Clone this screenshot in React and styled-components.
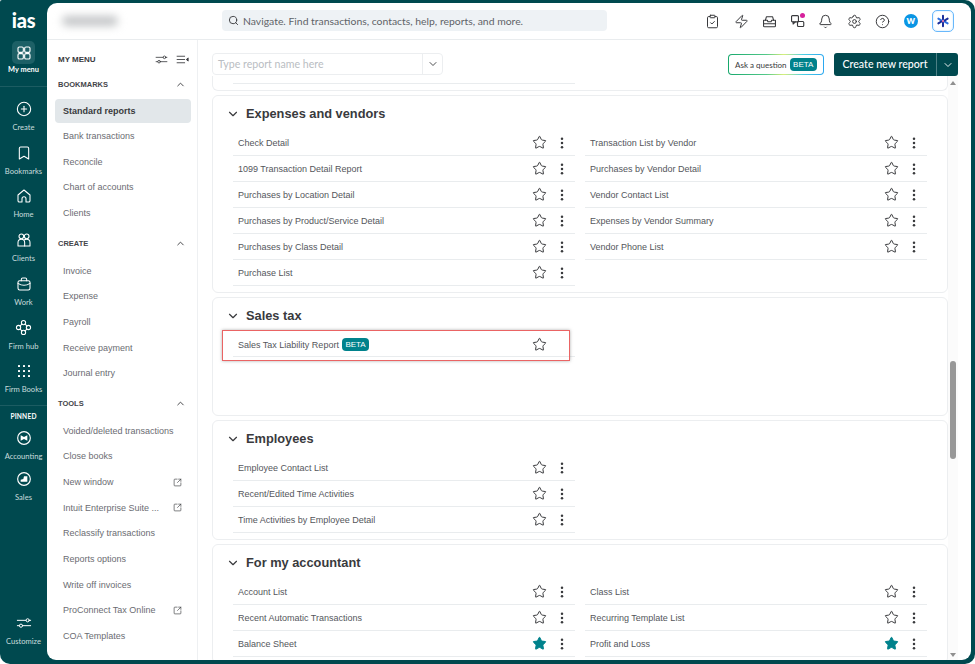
import React from 'react';
import styled, { createGlobalStyle } from 'styled-components';
import { ChevronDown, ChevronUp, Search, ClipboardCheck, Zap, Bell, Settings, CircleHelp, Star, CirclePlus, Bookmark, SquareArrowOutUpRight } from 'lucide-react';

const TEAL = '#00494f';
const ACCENT = '#00828c';
const SANS = '"Liberation Sans", Arial, sans-serif';
const HUMAN = 'Lato, "Noto Sans", sans-serif';

const Global = createGlobalStyle`
  html, body { margin: 0; padding: 0; background: #fff; }
  * { box-sizing: border-box; }
`;

const Win = styled.div`
  width: 975px; height: 664px; display: flex; background: ${TEAL};
  border-radius: 2px 10px 10px 10px; overflow: hidden; font-family: ${SANS};
`;
const Rail = styled.nav`
  width: 47px; flex: none; display: flex; flex-direction: column; align-items: center;
  padding: 10px 0 10px; color: #fff;
`;
const Logo = styled.div`
  height: 20px; font: 900 20px/20px ${HUMAN}; letter-spacing: -0.2px; color: #fff;
`;
const Tile = styled.div`
  width: 23px; height: 23px; margin-top: 11px; border-radius: 5px; background: #1d6066;
  display: flex; align-items: center; justify-content: center;
`;
const TileLabel = styled.div`
  height: 12px; font: 700 7.4px/12px ${HUMAN}; color: #fff; white-space: nowrap;
`;
const RailRule = styled.div`
  width: 47px; height: 1px; flex: none; background: #1c5c62; margin-top: ${p => p.$top}px;
`;
const RailGroup = styled.div`padding-top: 9px; display: flex; flex-direction: column;`;
const RailItem = styled.div`
  width: 47px; flex: none; height: ${p => p.$h || 43.7}px; padding-top: 5px;
  display: flex; flex-direction: column; align-items: center; color: #fff;
  & > svg { flex: none; }
`;
const RailText = styled.span`
  margin-top: 5px; height: 10px; font: 400 7.6px/10px ${HUMAN}; color: #c9dcdd; white-space: nowrap;
`;
const Pinned = styled.div`
  height: 10px; margin-top: 5px; margin-bottom: 4px; font: 700 6.6px/10px ${HUMAN}; color: #fff; letter-spacing: .2px;
`;
const RailFoot = styled.div`margin-top: auto;`;

const Panel = styled.div`
  flex: 1; min-width: 0; margin: 3px 4px 4px 0; background: #fff; border-radius: 10px 9px 9px 9px;
  display: flex; flex-direction: column; overflow: hidden;
`;
const TopBar = styled.header`
  height: 37px; flex: none; border-bottom: 1px solid #e9ecee; display: flex; align-items: center;
  padding-left: 175px; padding-right: 17px; position: relative;
`;
const BlurName = styled.div`
  position: absolute; left: 15px; top: 13px; width: 56px; height: 10px; background: #c3c5c7;
  border-radius: 5px; filter: blur(4px);
`;
const GlobalSearch = styled.div`
  width: 385px; height: 21px; margin-top: -1px; background: #eef2f5; border-radius: 4px; display: flex; align-items: center;
  padding-left: 6px; gap: 4px; color: #5f6368; font: 400 10.4px ${HUMAN};
`;
const TopIcons = styled.div`
  margin-left: auto; display: flex; align-items: center; color: #393a3d;
`;
const TopIcon = styled.div`
  width: 28.3px; height: 22px; display: flex; align-items: center; justify-content: center; position: relative;
`;
const Dot = styled.span`
  position: absolute; top: 3px; right: 7px; width: 5px; height: 5px; border-radius: 50%; background: #d6219c;
`;
const Avatar = styled.div`
  width: 14px; height: 14px; border-radius: 50%; background: #0a95e4; color: #fff;
  font: 800 8px/14px ${HUMAN}; text-align: center;
`;
const AiButton = styled.div`
  width: 22px; height: 22px; margin-left: 7px; border-radius: 5px; border: 1.5px solid #69b8fb;
  display: flex; align-items: center; justify-content: center; box-shadow: inset 0 0 2px #b8e0ff;
`;

const Body = styled.div`flex: 1; min-height: 0; display: flex;`;

const Sidebar = styled.aside`
  width: 151px; flex: none; border-right: 1px solid #eef0f2; padding: 7px 6px 0 8px; overflow: hidden;
`;
const MenuTop = styled.div`
  height: 24px; display: flex; align-items: center; padding: 0 2.5px 0 3px; color: #393a3d;
  font: 700 8px ${SANS};
`;
const MenuTools = styled.div`margin-left: auto; display: flex; align-items: center; gap: 8px; color: #393a3d;`;
const Section = styled.section`
  & + & { margin-top: 5px; }
  & + & > div:last-child { margin-top: 2.5px; }
`;
const SectionHead = styled.div`
  height: 26px; display: flex; align-items: center; justify-content: space-between;
  padding: 0 5px 0 3px; font: 700 7.5px ${SANS}; color: #44464a; text-transform: uppercase;
`;
const NavList = styled.div`margin-top: 1.5px;`;
const NavItem = styled.div`
  height: 24px; margin-bottom: 1.67px; border-radius: 4px; display: flex; align-items: center;
  padding: 0 9px 0 8px; justify-content: space-between; white-space: nowrap;
  font: ${p => (p.$active ? 700 : 400)} 9px ${SANS};
  color: ${p => (p.$active ? '#393a3d' : '#6b6c72')};
  background: ${p => (p.$active ? '#e2e7ea' : 'transparent')};
`;

const Main = styled.main`flex: 1; min-width: 0; display: flex; flex-direction: column;`;
const Toolbar = styled.div`
  height: 36px; flex: none; padding: 13px 13px 0 14px; display: flex; align-items: flex-start;
`;
const ReportFilter = styled.div`
  width: 231px; height: 22px; border: 1px solid #eceef0; border-radius: 4px; display: flex; align-items: stretch;
`;
const FilterText = styled.div`
  flex: 1; padding-left: 5px; font: 400 10.6px/20px ${HUMAN}; color: #b9bdc2;
`;
const FilterCaret = styled.div`
  width: 20px; border-left: 1px solid #eceef0; display: flex; align-items: center; justify-content: center; color: #393a3d;
`;
const Ask = styled.div`
  margin-left: auto; margin-top: 1px; width: 96px; height: 21px; border-radius: 4px; border: 1.5px solid transparent;
  background: linear-gradient(#fff, #fff) padding-box,
    linear-gradient(90deg, #17a86c, #54c98a 40%, #d8ef7c 58%, #4fcfe4 78%, #2aa7f0) border-box;
  display: flex; align-items: center; padding-left: 6px; gap: 3px; font: 400 8px ${HUMAN}; color: #393a3d; white-space: nowrap;
`;
const Beta = styled.span`
  display: inline-flex; align-items: center; height: 13px; background: ${ACCENT}; color: #fff; border-radius: 4px;
  font: 400 8px/13px ${SANS}; padding: 0 3.5px;
`;
const CreateBtn = styled.div`
  margin-left: 10px; width: 124px; height: 23px; background: ${TEAL}; color: #fff; border-radius: 3px;
  display: flex; align-items: stretch; font: 500 10.6px/23px ${HUMAN};
`;
const CreateLabel = styled.div`flex: 1; text-align: center; white-space: nowrap;`;
const CreateCaret = styled.div`
  width: 22px; border-left: 1px solid #4d8085; display: flex; align-items: center; justify-content: center;
`;

const ScrollRow = styled.div`flex: 1; min-height: 0; display: flex; padding-right: 13px;`;
const Cards = styled.div`
  flex: 1; min-width: 0; padding-left: 14px; display: flex; flex-direction: column; gap: 4px; overflow: hidden;
`;
const Stub = styled.div`
  height: 15px; flex: none; border: 1px solid #eceef0; border-top: 0; border-radius: 0 0 6px 6px; padding: 7px 20px 0;
`;
const StubLine = styled.div`width: 342px; height: 1px; background: #e9ecee;`;
const Card = styled.section`
  flex: none; border: 1px solid #eceef0; border-radius: 6px; padding: 0 20px 6px;
  min-height: ${p => p.$min || 0}px;
`;
const CardHead = styled.h2`
  margin: 0 0 0 -7px; height: 34px; display: flex; align-items: center; gap: 6px; color: #393a3d;
  padding-top: 1px; font: 700 12.8px ${SANS};
`;
const Grid = styled.div`display: grid; grid-template-columns: 342px 342px; column-gap: 10px; align-items: start;`;
const Col = styled.div`display: flex; flex-direction: column;`;
const Row = styled.div`
  height: ${p => (p.$flag ? 25 : 26)}px; border-bottom: 1px solid #e9ecee; display: flex; align-items: center; padding-left: 5px;
  font: 400 9px ${SANS}; color: #54565b; position: relative;
  ${p => p.$flag && `
    padding-top: 1px;
    &::before { content: ''; position: absolute; left: -11px; width: 346px; top: -2px; height: 29px;
      border: 1.5px solid #ea6464; box-shadow: 0 0 3px rgba(110,110,110,.55); pointer-events: none; }
  `}
`;
const RowBeta = styled(Beta)`margin-left: 3px;`;
const StarSlot = styled.div`
  position: absolute; left: 298.5px; top: 4.5px; width: 15px; height: 15px; display: flex;
`;
const Kebab = styled.svg`position: absolute; left: 325.5px; top: 6.5px; width: 6px; height: 12px; color: #393a3d;`;

const Scrollbar = styled.div`
  width: 10px; flex: none; background: #fbfbfb; display: flex; flex-direction: column; align-items: center; padding-top: 5px;
`;
const Arrow = styled.div`
  width: 0; height: 0; border-left: 3px solid transparent; border-right: 3px solid transparent;
  ${p => p.$down ? 'border-top: 4px solid #8f8f8f; margin-top: auto; margin-bottom: 3px;' : 'border-bottom: 4px solid #8f8f8f;'}
`;
const Thumb = styled.div`width: 6px; height: 98px; margin-top: 276px; border-radius: 3px; background: #989898;`;

const Ico = ({ size = 16, sw = 1.6, children, vb = 24 }) => (
  <svg width={size} height={size} viewBox={`0 0 ${vb} ${vb}`} fill="none" stroke="currentColor" strokeWidth={sw} strokeLinecap="round" strokeLinejoin="round">{children}</svg>
);
const GridIcon = () => (
  <Ico size={16} sw={1.7}>
    <rect x="3" y="3" width="8" height="8" rx="2" /><rect x="13" y="3" width="8" height="8" rx="2" />
    <rect x="3" y="13" width="8" height="8" rx="2" /><rect x="13" y="13" width="8" height="8" rx="2" />
  </Ico>
);
const HomeIcon = () => (
  <Ico><path d="M3 10.5 12 3l9 7.5V19a2 2 0 0 1-2 2h-4v-5a3 3 0 0 0-6 0v5H5a2 2 0 0 1-2-2z" /></Ico>
);
const ClientsIcon = () => (
  <Ico>
    <circle cx="8" cy="6.5" r="3.5" /><circle cx="16" cy="6.5" r="3.5" />
    <path d="M3 21v-5c0-3 2-5 5-5s5 2 5 5v5z" /><path d="M12.5 11.5c1-.4 2.2-.5 3.5-.5 3 0 5 2 5 5v5h-8" />
  </Ico>
);
const WorkIcon = () => (
  <Ico>
    <rect x="3" y="7" width="18" height="14" rx="2.5" /><path d="M8 7V5a2 2 0 0 1 2-2h4a2 2 0 0 1 2 2v2" />
    <path d="M3 11c3 2 6 3 9 3s6-1 9-3" />
  </Ico>
);
const HubIcon = () => (
  <Ico size={17} sw={1.5}>
    <circle cx="12" cy="5" r="3" /><circle cx="5" cy="12" r="3" /><circle cx="19" cy="12" r="3" /><circle cx="12" cy="19" r="3" />
    <path d="m9.8 7.2-2.6 2.6M14.2 7.2l2.6 2.6M7.2 14.2l2.6 2.6M16.8 14.2l-2.6 2.6" />
  </Ico>
);
const DotsIcon = () => (
  <svg width="16" height="16" viewBox="0 0 16 16" fill="currentColor">
    {[3, 8, 13].flatMap(y => [3, 8, 13].map(x => <rect key={`${x}-${y}`} x={x - 1} y={y - 1} width="2" height="2" rx=".5" />))}
  </svg>
);
const BowIcon = () => (
  <Ico sw={1.7}><circle cx="12" cy="12" r="9.5" /><path d="M7 8v8l5-2.5L17 16V8l-5 2.5z" fill="currentColor" stroke="none" /></Ico>
);
const SalesIcon = () => (
  <Ico sw={1.7}><circle cx="12" cy="12" r="9.5" /><path d="M7 16v-3l4-1 1-4h5v8z" fill="currentColor" stroke="none" /></Ico>
);
const SlidersIcon = ({ size = 16 }) => (
  <Ico size={size} sw={1.5}>
    <path d="M2 8h13M20 8h2M2 16h3M10 16h12" /><circle cx="17.5" cy="8" r="2.4" /><circle cx="7.5" cy="16" r="2.4" />
  </Ico>
);
const CollapseIcon = () => (
  <Ico size={13} sw={1.6}>
    <path d="M2 6h14M2 12h14M2 18h14" /><path d="M22 9.5 19 12l3 2.5z" fill="currentColor" />
  </Ico>
);
const TrayIcon = () => (
  <Ico size={15} sw={1.7}>
    <path d="M5.5 10 7 4.5h10L18.5 10" />
    <path d="M2.5 10h6l1 2.5h5l1-2.5h6v9a1.5 1.5 0 0 1-1.5 1.5H4A1.5 1.5 0 0 1 2.5 19z" />
    <path d="M2.5 15.5h19" />
  </Ico>
);
const ChatIcon = () => (
  <Ico size={15} sw={1.8}>
    <rect x="2.5" y="2.5" width="11" height="10" rx="1.5" /><rect x="12" y="12" width="10" height="8" rx="1.5" />
    <path d="M5 12.5V16l3.5-3.5" />
  </Ico>
);
const AiGlyph = () => (
  <svg width="14" height="14" viewBox="0 0 24 24" stroke="#1a2f9c" strokeWidth="3.4" strokeLinecap="round" fill="none">
    <path d="M12 3v6M12 15v6" /><path d="M4 8l5 3M15 13l5 3" stroke="#2e6fe0" /><path d="M20 8l-5 3M9 13l-5 3" />
    <circle cx="12" cy="12" r="1.5" fill="#e0307a" stroke="none" />
  </svg>
);

const FavStar = ({ on }) => (
  <StarSlot>
    <Star size={15} strokeWidth={1.6} color={on ? ACCENT : '#393a3d'} fill={on ? ACCENT : 'none'} />
  </StarSlot>
);
const Dots = () => (
  <Kebab viewBox="0 0 6 12" fill="currentColor">
    <circle cx="3" cy="1.7" r="1.25" /><circle cx="3" cy="6" r="1.25" /><circle cx="3" cy="10.3" r="1.25" />
  </Kebab>
);
const Report = ({ name, on, beta, flag }) => (
  <Row $flag={flag}>
    {name}{beta && <RowBeta>BETA</RowBeta>}
    <FavStar on={on} />
    {!flag && <Dots />}
  </Row>
);

const railTop = [
  [CirclePlus, 'Create'], [Bookmark, 'Bookmarks'], [HomeIcon, 'Home'], [ClientsIcon, 'Clients'],
  [WorkIcon, 'Work'], [HubIcon, 'Firm hub'], [DotsIcon, 'Firm Books'],
];
const menu = [
  { title: 'Bookmarks', items: ['Standard reports', 'Bank transactions', 'Reconcile', 'Chart of accounts', 'Clients'] },
  { title: 'Create', items: ['Invoice', 'Expense', 'Payroll', 'Receive payment', 'Journal entry'] },
  { title: 'Tools', items: ['Voided/deleted transactions', 'Close books', 'New window*', 'Intuit Enterprise Suite ...*', 'Reclassify transactions', 'Reports options', 'Write off invoices', 'ProConnect Tax Online*', 'COA Templates'] },
];
const topIcons = [
  <ClipboardCheck size={15} strokeWidth={1.6} />, <Zap size={15} strokeWidth={1.6} />, <TrayIcon />,
  <><ChatIcon /><Dot /></>, <Bell size={15} strokeWidth={1.6} />, <Settings size={15} strokeWidth={1.6} />,
  <CircleHelp size={15} strokeWidth={1.6} />, <Avatar>W</Avatar>,
];
const sections = [
  { title: 'Expenses and vendors', cols: [
    ['Check Detail', '1099 Transaction Detail Report', 'Purchases by Location Detail', 'Purchases by Product/Service Detail', 'Purchases by Class Detail', 'Purchase List'],
    ['Transaction List by Vendor', 'Purchases by Vendor Detail', 'Vendor Contact List', 'Expenses by Vendor Summary', 'Vendor Phone List'],
  ] },
  { title: 'Sales tax', min: 119, flagged: true, cols: [['Sales Tax Liability Report'], []] },
  { title: 'Employees', cols: [['Employee Contact List', 'Recent/Edited Time Activities', 'Time Activities by Employee Detail'], []] },
  { title: 'For my accountant', cols: [
    ['Account List', 'Recent Automatic Transactions', 'Balance Sheet*'],
    ['Class List', 'Recurring Template List', 'Profit and Loss*'],
  ] },
];

export default function App() {
  return (
    <>
      <Global />
      <Win>
        <Rail>
          <Logo>ias</Logo>
          <Tile><GridIcon /></Tile>
          <TileLabel>My menu</TileLabel>
          <RailRule $top={10} />
          <RailGroup>
            {railTop.map(([I, label]) => (
              <RailItem key={label}><I size={16} strokeWidth={1.6} /><RailText>{label}</RailText></RailItem>
            ))}
          </RailGroup>
          <RailRule $top={3} />
          <Pinned>PINNED</Pinned>
          <RailItem $h={41.5}><BowIcon /><RailText>Accounting</RailText></RailItem>
          <RailItem $h={41.5}><SalesIcon /><RailText>Sales</RailText></RailItem>
          <RailFoot>
            <RailItem><SlidersIcon /><RailText>Customize</RailText></RailItem>
          </RailFoot>
        </Rail>
        <Panel>
          <TopBar>
            <BlurName />
            <GlobalSearch><Search size={11} strokeWidth={2} color="#393a3d" />Navigate. Find transactions, contacts, help, reports, and more.</GlobalSearch>
            <TopIcons>
              {topIcons.map((node, i) => <TopIcon key={i}>{node}</TopIcon>)}
              <AiButton><AiGlyph /></AiButton>
            </TopIcons>
          </TopBar>
          <Body>
            <Sidebar>
              <MenuTop>MY MENU<MenuTools><SlidersIcon size={13} /><CollapseIcon /></MenuTools></MenuTop>
              {menu.map(s => (
                <Section key={s.title}>
                  <SectionHead>{s.title}<ChevronUp size={11} strokeWidth={2} color="#393a3d" /></SectionHead>
                  <NavList>
                    {s.items.map(it => {
                      const ext = it.endsWith('*');
                      return (
                        <NavItem key={it} $active={it === 'Standard reports'}>
                          {ext ? it.slice(0, -1) : it}
                          {ext && <SquareArrowOutUpRight size={9} strokeWidth={1.7} color="#393a3d" />}
                        </NavItem>
                      );
                    })}
                  </NavList>
                </Section>
              ))}
            </Sidebar>
            <Main>
              <Toolbar>
                <ReportFilter>
                  <FilterText>Type report name here</FilterText>
                  <FilterCaret><ChevronDown size={12} strokeWidth={1.8} /></FilterCaret>
                </ReportFilter>
                <Ask>Ask a question <Beta>BETA</Beta></Ask>
                <CreateBtn>
                  <CreateLabel>Create new report</CreateLabel>
                  <CreateCaret><ChevronDown size={12} strokeWidth={1.8} /></CreateCaret>
                </CreateBtn>
              </Toolbar>
              <ScrollRow>
                <Cards>
                  <Stub><StubLine /></Stub>
                  {sections.map(s => (
                    <Card key={s.title} $min={s.min}>
                      <CardHead><ChevronDown size={14} strokeWidth={2} />{s.title}</CardHead>
                      <Grid>
                        {s.cols.map((c, i) => (
                          <Col key={i}>
                            {c.map(r => {
                              const on = r.endsWith('*');
                              return <Report key={r} name={on ? r.slice(0, -1) : r} on={on} beta={s.flagged} flag={s.flagged} />;
                            })}
                          </Col>
                        ))}
                      </Grid>
                    </Card>
                  ))}
                </Cards>
                <Scrollbar>
                  <Arrow />
                  <Thumb />
                  <Arrow $down />
                </Scrollbar>
              </ScrollRow>
            </Main>
          </Body>
        </Panel>
      </Win>
    </>
  );
}
